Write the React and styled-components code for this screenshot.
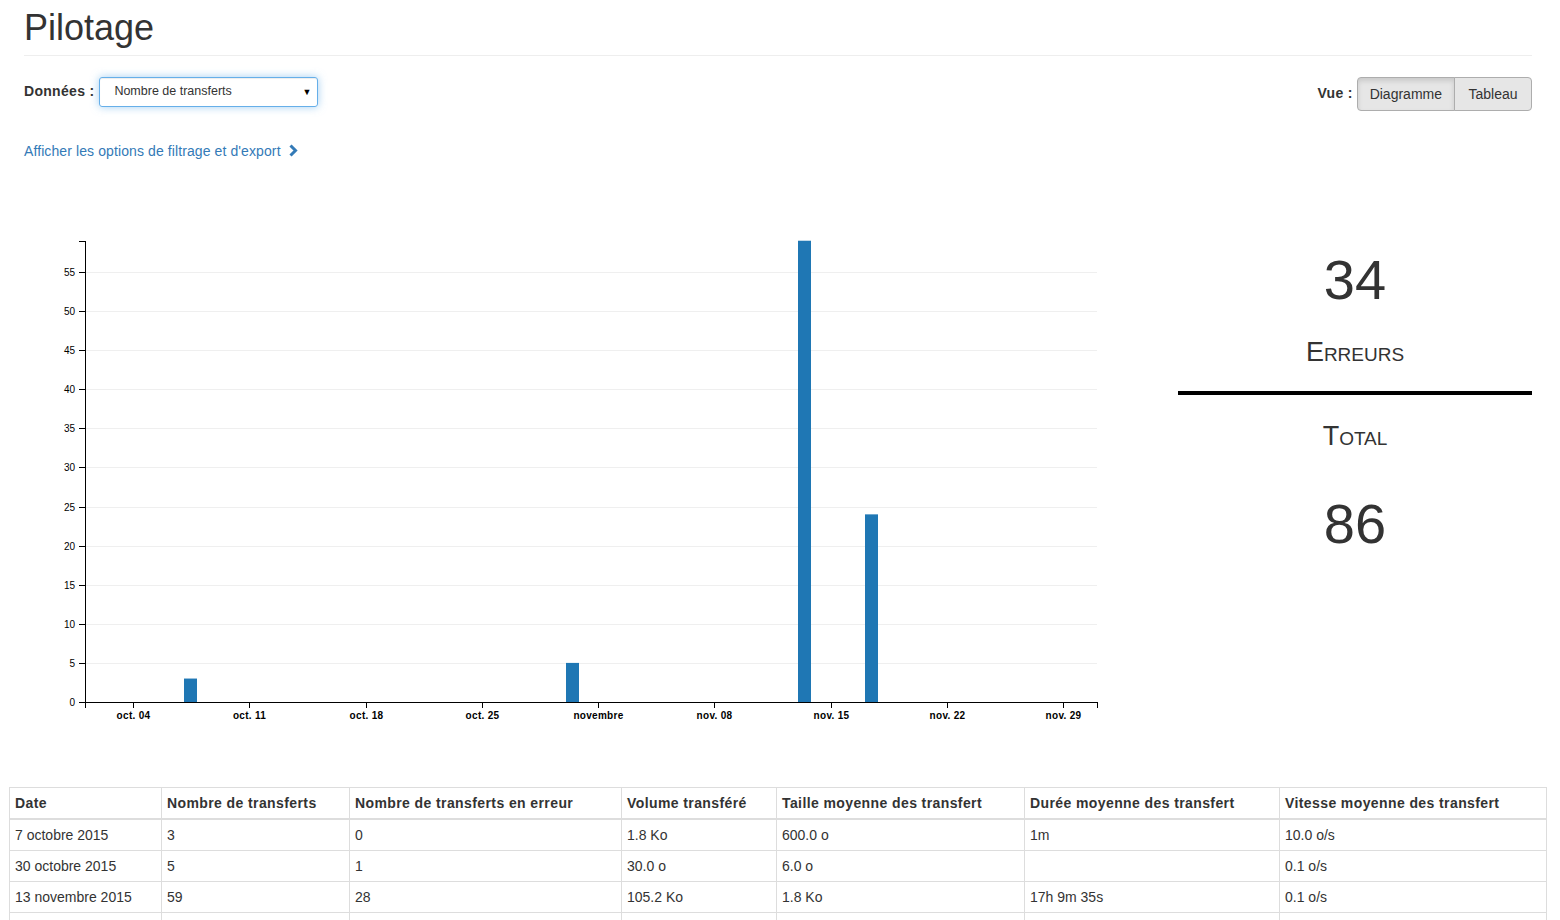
import React from 'react';
import styled, { createGlobalStyle } from 'styled-components';

const GlobalStyle = createGlobalStyle`
  body {
    margin: 0;
    background: #fff;
    color: #333;
    font-family: "Liberation Sans", Arial, sans-serif;
    font-size: 14px;
    line-height: 1.42857;
  }
`;

const Container = styled.div`
  padding: 0 28px 0 24px;
`;

const Title = styled.h1`
  margin: 8px 0 0;
  padding-bottom: 7px;
  border-bottom: 1px solid #eee;
  font-size: 36px;
  font-weight: 500;
  line-height: 1.1;
`;

const Toolbar = styled.div`
  display: flex;
  justify-content: space-between;
  align-items: flex-start;
  margin-top: 21px;
  height: 34px;
`;

const Field = styled.div`
  display: flex;
  align-items: center;
`;

const Label = styled.span`
  font-weight: bold;
  letter-spacing: 0.3px;
  margin-right: ${p => p.gap || 4}px;
  padding-top: ${p => p.nudge || 0}px;
`;

const SelectBox = styled.div`
  box-sizing: border-box;
  width: 219px;
  height: 30px;
  display: flex;
  align-items: center;
  justify-content: space-between;
  padding: 1px 6px 0 14px;
  border: 1px solid #66afe9;
  border-radius: 3px;
  box-shadow: inset 0 1px 1px rgba(0,0,0,.075), 0 0 8px rgba(102,175,233,.6);
  font-size: 12.5px;
  color: #333;
`;

const Caret = styled.span`
  font-size: 9px;
  color: #000;
`;

const BtnGroup = styled.div`
  display: flex;
`;

const Btn = styled.button`
  font-family: inherit;
  font-size: 14px;
  line-height: 20px;
  padding: 6px 12px;
  min-width: ${p => p.minW || 0}px;
  color: #333;
  background: #e6e6e6;
  border: 1px solid #adadad;
  border-radius: ${p => (p.first ? '4px 0 0 4px' : '0 4px 4px 0')};
  margin-left: ${p => (p.first ? '0' : '-1px')};
  box-shadow: ${p => (p.active ? 'inset 0 3px 5px rgba(0,0,0,.125)' : 'none')};
  cursor: pointer;
`;

const FilterLink = styled.a`
  display: inline-flex;
  align-items: center;
  gap: 7px;
  margin-top: 30px;
  line-height: 20px;
  letter-spacing: 0.1px;
  color: #337ab7;
  text-decoration: none;
`;

const ChartRow = styled.div`
  display: flex;
  justify-content: space-between;
  margin-top: 68px;
  height: 500px;
`;

const Stats = styled.div`
  width: 354px;
  padding-top: 19px;
  text-align: center;
`;

const BigNumber = styled.div`
  font-size: 56px;
  line-height: 62px;
  margin-top: ${p => p.gap || 0}px;
`;

const Caption = styled.div`
  font-size: 27px;
  line-height: 30px;
  font-variant: small-caps;
  margin-top: 26px;
`;

const Divider = styled.div`
  height: 4px;
  background: #000;
  margin-top: 24px;
`;

const TableWrap = styled.div`
  padding: 0 14px 0 9px;
  margin-top: 57px;
`;

const Table = styled.table`
  width: 100%;
  table-layout: fixed;
  border-collapse: collapse;
  border: 1px solid #ddd;

  th, td {
    padding: 5px 5px;
    height: 20px;
    line-height: 20px;
    border: 1px solid #ddd;
    text-align: left;
    white-space: nowrap;
  }

  th {
    letter-spacing: 0.4px;
    border-bottom: 2px solid #ddd;
  }
`;

const Chevron = () => (
  <svg width="10" height="13" viewBox="0 0 10 13">
    <polyline points="2.5,1.5 7.5,6.5 2.5,11.5" fill="none" stroke="#337ab7" strokeWidth="3" strokeLinejoin="miter" />
  </svg>
);

// chart scales (svg coordinates)
const dayX = d => 59.2 + d * 16.607;
const valY = v => 472 - v * (430 / 55);

const yTicks = [0, 5, 10, 15, 20, 25, 30, 35, 40, 45, 50, 55];
const xTicks = [
  [3, 'oct. 04'], [10, 'oct. 11'], [17, 'oct. 18'], [24, 'oct. 25'],
  [31, 'novembre'], [38, 'nov. 08'], [45, 'nov. 15'], [52, 'nov. 22'], [59, 'nov. 29'],
];
const bars = [[6, 3], [29, 5], [43, 59], [47, 24]];

const Chart = () => (
  <svg width="1110" height="500" style={{ display: 'block' }}>
    <g fontFamily="Liberation Sans, Arial, sans-serif" fontSize="10" fill="#000">
      {yTicks.map(v => {
        const y = Math.round(valY(v)) + 0.5;
        return (
          <g key={v}>
            {v > 0 && <line x1="61" x2="1073" y1={y} y2={y} stroke="#efefef" shapeRendering="crispEdges" />}
            <line x1="55" x2="61" y1={y} y2={y} stroke="#000" shapeRendering="crispEdges" />
            <text x="51" y={y + 3.5} textAnchor="end">{v}</text>
          </g>
        );
      })}
      {bars.map(([d, v]) => (
        <rect key={d} x={Math.round(dayX(d)) + 1} y={valY(v)} width="13" height={472 - valY(v)} fill="#1f77b4" />
      ))}
      {xTicks.map(([d, label]) => {
        const x = Math.round(dayX(d)) + 0.5;
        return (
          <g key={d}>
            <line x1={x} x2={x} y1="472" y2="478" stroke="#000" shapeRendering="crispEdges" />
            <text x={x} y="489" textAnchor="middle" fontWeight="bold" letterSpacing="0.3">{label}</text>
          </g>
        );
      })}
      <path d="M55,11.5 H61.5 V472.5 H1073.5 V478" fill="none" stroke="#000" shapeRendering="crispEdges" />
      <path d="M61.5,472 V478" fill="none" stroke="#000" shapeRendering="crispEdges" />
    </g>
  </svg>
);

const columns = [
  ['Date', 152],
  ['Nombre de transferts', 188],
  ['Nombre de transferts en erreur', 272],
  ['Volume transféré', 155],
  ['Taille moyenne des transfert', 248],
  ['Durée moyenne des transfert', 255],
  ['Vitesse moyenne des transfert', 267],
];

const rows = [
  ['7 octobre 2015', '3', '0', '1.8 Ko', '600.0 o', '1m', '10.0 o/s'],
  ['30 octobre 2015', '5', '1', '30.0 o', '6.0 o', '', '0.1 o/s'],
  ['13 novembre 2015', '59', '28', '105.2 Ko', '1.8 Ko', '17h 9m 35s', '0.1 o/s'],
  ['', '', '', '', '', '', ''],
];

const App = () => (
  <>
    <GlobalStyle />
    <Container>
      <Title>Pilotage</Title>
      <Toolbar>
        <Field>
          <Label gap={5}>Données :</Label>
          <SelectBox>
            <span>Nombre de transferts</span>
            <Caret>▼</Caret>
          </SelectBox>
        </Field>
        <Field>
          <Label nudge={1}>Vue :</Label>
          <BtnGroup>
            <Btn first active>Diagramme</Btn>
            <Btn minW={78}>Tableau</Btn>
          </BtnGroup>
        </Field>
      </Toolbar>
      <FilterLink href="#">
        Afficher les options de filtrage et d'export
        <Chevron />
      </FilterLink>
      <ChartRow>
        <Chart />
        <Stats>
          <BigNumber>34</BigNumber>
          <Caption>Erreurs</Caption>
          <Divider />
          <Caption>Total</Caption>
          <BigNumber gap={42}>86</BigNumber>
        </Stats>
      </ChartRow>
    </Container>
    <TableWrap>
      <Table>
        <colgroup>
          {columns.map(([name, w]) => <col key={name} style={{ width: w }} />)}
        </colgroup>
        <thead>
          <tr>
            {columns.map(([name]) => <th key={name}>{name}</th>)}
          </tr>
        </thead>
        <tbody>
          {rows.map((r, ri) => (
            <tr key={ri}>
              {r.map((c, i) => <td key={i}>{c}</td>)}
            </tr>
          ))}
        </tbody>
      </Table>
    </TableWrap>
  </>
);

export default App;
